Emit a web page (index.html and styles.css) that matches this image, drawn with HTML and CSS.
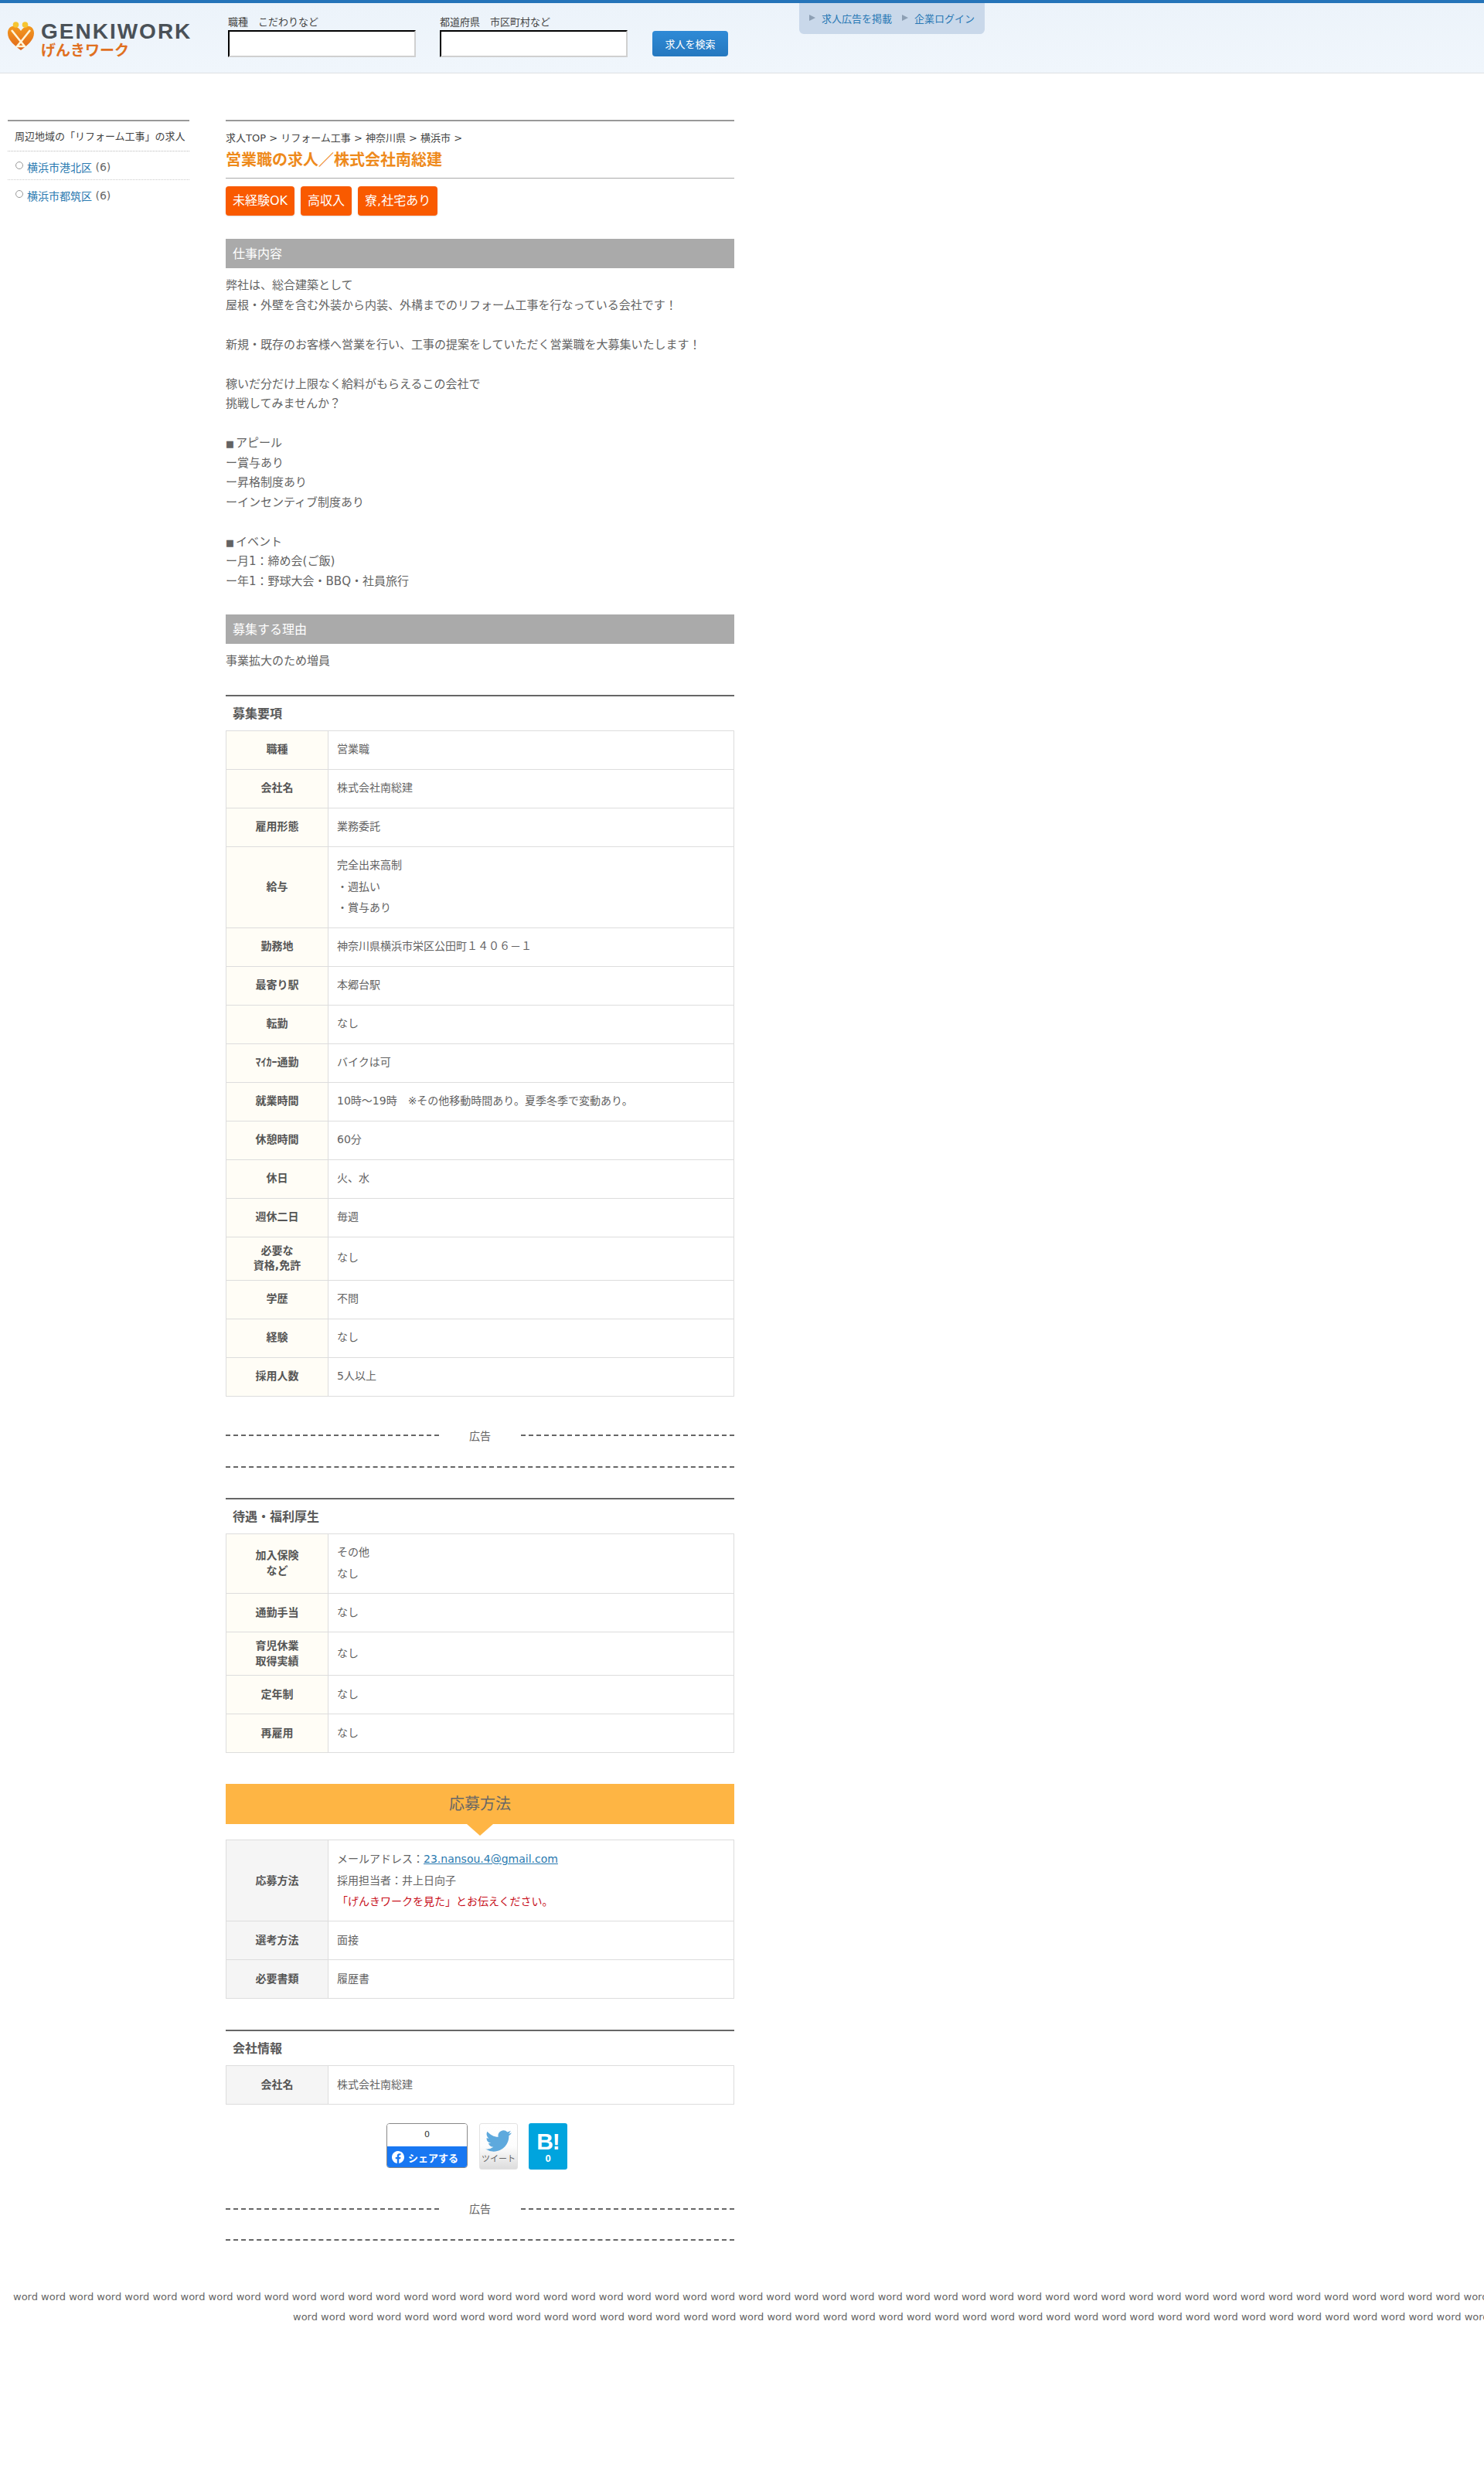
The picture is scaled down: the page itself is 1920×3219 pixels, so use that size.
FILE: index.html
```html
<!DOCTYPE html>
<html lang="ja">
<head>
<meta charset="utf-8">
<title>営業職の求人／株式会社南総建</title>
<link rel="stylesheet" href="styles.css">
</head>
<body>
<header class="site-header">
  <a class="logo">
    <svg class="logo-mark" viewBox="0 0 34 38" width="34" height="38">
      <defs><linearGradient id="hg" x1="0" y1="0" x2="0" y2="1"><stop offset="0" stop-color="#f39a1f"/><stop offset="1" stop-color="#e0651a"/></linearGradient></defs>
      <path d="M17 37C9 31 0 24 0 15 0 9 4 5 9 6c4 1 6 3 8 6 2-3 4-5 8-6 5-1 9 3 9 9 0 9-9 16-17 22z" fill="url(#hg)"/>
      <path d="M5 11l12 15L29 11M17 26l-5 6h10z" fill="none" stroke="#fff5d8" stroke-width="2.6"/>
      <circle cx="10.500" cy="4" r="3.800" fill="#f6c531"/><circle cx="22.500" cy="4" r="3.800" fill="#f6c531"/>
    </svg>
    <span class="logo-text"><span class="logo-en">GENKIWORK</span><span class="logo-ja">げんきワーク</span></span>
  </a>
  <form class="search">
    <label class="field"><span>職種　こだわりなど</span><input type="text"></label>
    <label class="field"><span>都道府県　市区町村など</span><input type="text"></label>
    <button type="button" class="search-btn">求人を検索</button>
  </form>
  <nav class="top-nav">
    <a><i class="arrow"></i>求人広告を掲載</a>
    <a><i class="arrow"></i>企業ログイン</a>
  </nav>
</header>

<div class="wrap">
  <aside class="side">
    <h3 class="side-title">周辺地域の「リフォーム工事」の求人</h3>
    <ul class="side-list">
      <li><a>横浜市港北区</a> (6)</li>
      <li><a>横浜市都筑区</a> (6)</li>
    </ul>
  </aside>

  <main class="main">
    <p class="crumbs">求人TOP &gt; リフォーム工事 &gt; 神奈川県 &gt; 横浜市 &gt;</p>
    <h1 class="title">営業職の求人／株式会社南総建</h1>
    <div class="tags"><span class="tag">未経験OK</span><span class="tag">高収入</span><span class="tag">寮,社宅あり</span></div>

    <h2 class="bar first">仕事内容</h2>
    <p class="body-text">弊社は、総合建築として<br>屋根・外壁を含む外装から内装、外構までのリフォーム工事を行なっている会社です！<br><br>新規・既存のお客様へ営業を行い、工事の提案をしていただく営業職を大募集いたします！<br><br>稼いだ分だけ上限なく給料がもらえるこの会社で<br>挑戦してみませんか？<br><br><span class="sq">■</span>アピール<br>ー賞与あり<br>ー昇格制度あり<br>ーインセンティブ制度あり<br><br><span class="sq">■</span>イベント<br>ー月1：締め会(ご飯)<br>ー年1：野球大会・BBQ・社員旅行</p>

    <h2 class="bar">募集する理由</h2>
    <p class="body-text">事業拡大のため増員</p>

    <h2 class="sub">募集要項</h2>
    <table class="info">
      <tr><th>職種</th><td>営業職</td></tr>
      <tr><th>会社名</th><td>株式会社南総建</td></tr>
      <tr><th>雇用形態</th><td>業務委託</td></tr>
      <tr><th>給与</th><td>完全出来高制<br>・週払い<br>・賞与あり</td></tr>
      <tr><th>勤務地</th><td>神奈川県横浜市栄区公田町１４０６－１</td></tr>
      <tr><th>最寄り駅</th><td>本郷台駅</td></tr>
      <tr><th>転勤</th><td>なし</td></tr>
      <tr><th>ﾏｲｶｰ通勤</th><td>バイクは可</td></tr>
      <tr><th>就業時間</th><td>10時～19時　※その他移動時間あり。夏季冬季で変動あり。</td></tr>
      <tr><th>休憩時間</th><td>60分</td></tr>
      <tr><th>休日</th><td>火、水</td></tr>
      <tr><th>週休二日</th><td>毎週</td></tr>
      <tr><th>必要な<br>資格,免許</th><td>なし</td></tr>
      <tr><th>学歴</th><td>不問</td></tr>
      <tr><th>経験</th><td>なし</td></tr>
      <tr><th>採用人数</th><td>5人以上</td></tr>
    </table>

    <div class="ad"><div class="ad-head"><span>広告</span></div><div class="ad-foot"></div></div>

    <h2 class="sub after-ad">待遇・福利厚生</h2>
    <table class="info">
      <tr><th>加入保険<br>など</th><td>その他<br>なし</td></tr>
      <tr><th>通勤手当</th><td>なし</td></tr>
      <tr><th>育児休業<br>取得実績</th><td>なし</td></tr>
      <tr><th>定年制</th><td>なし</td></tr>
      <tr><th>再雇用</th><td>なし</td></tr>
    </table>

    <h2 class="banner">応募方法</h2>
    <table class="info gray">
      <tr><th>応募方法</th><td>メールアドレス：<a class="mail">23.nansou.4@gmail.com</a><br>採用担当者：井上日向子<br><span class="red">「げんきワークを見た」とお伝えください。</span></td></tr>
      <tr><th>選考方法</th><td>面接</td></tr>
      <tr><th>必要書類</th><td>履歴書</td></tr>
    </table>

    <h2 class="sub after-table">会社情報</h2>
    <table class="info gray">
      <tr><th>会社名</th><td>株式会社南総建</td></tr>
    </table>

    <div class="social">
      <a class="fb">
        <span class="fb-count">0</span>
        <span class="fb-btn">
          <svg viewBox="0 0 24 24" width="16" height="16"><path fill="#fff" d="M24 12.073c0-6.627-5.373-12-12-12s-12 5.373-12 12c0 5.990 4.388 10.954 10.125 11.854v-8.385H7.078v-3.470h3.047V9.430c0-3.007 1.792-4.669 4.533-4.669 1.312 0 2.686.235 2.686.235v2.953H15.830c-1.491 0-1.956.925-1.956 1.874v2.250h3.328l-.532 3.470h-2.796v8.385C19.612 23.027 24 18.062 24 12.073z"/></svg>
          シェアする
        </span>
      </a>
      <a class="tw">
        <svg viewBox="0 2 24 20" width="34" height="28"><path fill="#5ea9dd" d="M23.953 4.570a10 10 0 01-2.825.775 4.958 4.958 0 002.163-2.723c-.951.555-2.005.959-3.127 1.184a4.920 4.920 0 00-8.384 4.482C7.690 8.095 4.067 6.130 1.640 3.162a4.822 4.822 0 00-.666 2.475c0 1.710.870 3.213 2.188 4.096a4.904 4.904 0 01-2.228-.616v.060a4.923 4.923 0 003.946 4.827 4.996 4.996 0 01-2.212.085 4.936 4.936 0 004.604 3.417 9.867 9.867 0 01-6.102 2.105c-.390 0-.779-.023-1.170-.067a13.995 13.995 0 007.557 2.209c9.053 0 13.998-7.496 13.998-13.985 0-.210 0-.420-.015-.630A9.935 9.935 0 0024 4.590z"/></svg>
        <span>ツイート</span>
      </a>
      <a class="hb"><span class="hb-mark">B!</span><span class="hb-count">0</span></a>
    </div>

    <div class="ad"><div class="ad-head"><span>広告</span></div><div class="ad-foot"></div></div>
  </main>
</div>

<footer class="words">
  <div class="words-a">word word word word word word word word word word word word word word word word word word word word word word word word word word word word word word word word word word word word word word word word word word word word word word word word word word word word word word word word word</div>
  <div class="words-b">word word word word word word word word word word word word word word word word word word word word word word word word word word word word word word word word word word word word word word word word word word word word word word word</div>
</footer>
</body>
</html>
```
FILE: styles.css
```css
* { box-sizing: border-box; }
html, body { margin: 0; padding: 0; }
body {
  font-family: "DejaVu Sans", "Noto Sans CJK JP", sans-serif;
  font-size: 14px;
  color: #636363;
  background: #fff;
  overflow-x: hidden;
  min-height: 3219px;
}
a { color: inherit; text-decoration: none; }
h1, h2, h3, p, ul { margin: 0; padding: 0; }

.site-header {
  position: relative;
  display: flex;
  height: 95px;
  border-top: 4px solid #2574b9;
  border-bottom: 1px solid #dde1e3;
  background: linear-gradient(#ecf3fa, #f0f6fc);
}
.logo { display: flex; margin: 24px 0 0 10px; width: 285px; }
.logo-mark { flex: none; }
.logo-text { display: flex; flex-direction: column; margin: 0 0 0 9px; }
.logo-en {
  font: bold 28px/24px "Liberation Sans", sans-serif;
  letter-spacing: 2px;
  color: #4a5157;
  margin-top: 1px;
}
.logo-ja {
  font: bold 19px/22px "Noto Sans CJK JP", sans-serif;
  color: #e0701f;
}
.search { display: flex; align-items: flex-start; }
.field { display: flex; flex-direction: column; width: 243px; margin-right: 31px; font-size: 13px; color: #444; }
.field span { line-height: 20px; height: 20px; margin-top: 15px; }
.field input {
  width: 243px;
  height: 35px;
  padding: 0;
  background: #fff;
  border: 2px inset #d0d0d0;
  border-top-color: #222;
  border-left-color: #222;
  border-radius: 0;
}
.search-btn {
  width: 98px;
  height: 33px;
  margin: 36px 0 0 1px;
  border: 0;
  border-radius: 4px;
  background: linear-gradient(#2f8ad6, #2578bf);
  color: #fff;
  font: 13px/33px "DejaVu Sans", "Noto Sans CJK JP", sans-serif;
  padding: 1px 0 0;
}
.top-nav {
  position: absolute;
  left: 1034px;
  top: 0;
  width: 240px;
  height: 40px;
  display: flex;
  align-items: center;
  padding: 0 0 2px 13px;
  gap: 13px;
  border-radius: 0 0 6px 6px;
  background: #c9d8ea;
  color: #2a79b5;
  font-size: 13px;
}
.top-nav a { display: flex; align-items: center; white-space: nowrap; }
.arrow {
  display: block;
  width: 0;
  height: 0;
  margin-right: 8px;
  border-left: 8px solid #8d9fb4;
  border-top: 4px solid transparent;
  border-bottom: 4px solid transparent;
}

.wrap { display: flex; align-items: flex-start; margin-top: 60px; }
.side { width: 235px; margin-left: 10px; border-top: 2px solid #999; flex: none; }
.side-title {
  font-size: 13px;
  font-weight: normal;
  line-height: 20px;
  color: #444;
  padding: 10px 0 8px 9px;
  white-space: nowrap;
  border-bottom: 1px dotted #bbb;
}
.side-list { list-style: none; }
.side-list li {
  display: flex;
  align-items: center;
  position: relative;
  height: 37px;
  padding: 4px 0 0 25px;
  border-bottom: 1px dotted #ccc;
  white-space: pre;
  font-size: 14px;
  color: #666;
}
.side-list li:last-child { border-bottom: 0; padding-top: 3px; }
.side-list li::before {
  content: "";
  position: absolute;
  left: 10px;
  top: 13px;
  width: 8px;
  height: 8px;
  border: 1px solid #999;
  border-radius: 50%;
}
.side-list a { color: #2a7ab0; }

.main { width: 658px; margin-left: 47px; flex: none; border-top: 2px solid #999; }
.crumbs { font-size: 13px; line-height: 20px; color: #444; margin-top: 12px; }
.title {
  font-size: 20px;
  line-height: 28px;
  font-weight: bold;
  color: #ee8a1b;
  margin-top: 4px;
  padding-bottom: 9px;
  border-bottom: 1px solid #aaa;
}
.tags { display: flex; gap: 8px; margin-top: 10px; }
.tag {
  height: 38px;
  line-height: 38px;
  padding: 0 9px;
  border-radius: 4px;
  background: #f95a00;
  color: #fff;
  font-size: 16px;
  box-shadow: 0 1px 2px rgba(0,0,0,.12);
}
.bar {
  height: 38px;
  line-height: 39px;
  margin-top: 30px;
  padding-left: 9px;
  background: #aaa;
  color: #fff;
  font-size: 16px;
  font-weight: normal;
}
.body-text { font-size: 15px; line-height: 25.5px; margin-top: 10px; }
.sq { font-size: 11.5px; line-height: 0; letter-spacing: 2px; }
.sub {
  margin-top: 30px;
  height: 46px;
  line-height: 45px;
  padding-left: 9px;
  border-top: 2px solid #666;
  font-size: 16px;
  font-weight: bold;
  color: #585858;
}
.sub.after-ad { margin-top: 39px; }
.sub.after-table { margin-top: 40px; }

.info { width: 658px; border-collapse: collapse; table-layout: fixed; }
.info th, .info td { border: 1px solid #ddd; font-size: 14px; }
.info th {
  width: 132px;
  padding: 8px 4px;
  background: #fffdf6;
  line-height: 19.6px;
  font-weight: bold;
  text-align: center;
  color: #555;
}
.info td { padding: 10.75px 11px; line-height: 27.5px; text-align: left; }
.info.gray th { background: #f5f5f5; }
.mail { color: #2a7ab0; text-decoration: underline; }
.red { color: #c8101c; }

.ad { margin-top: 41px; }
.ad-head {
  display: flex;
  align-items: center;
  height: 20px;
}
.ad-head span { width: 106px; text-align: center; line-height: 20px; }
.ad-head::before, .ad-head::after {
  content: "";
  flex: 1;
  border-top: 2px dashed #666;
  margin-top: -1px;
}
.ad-foot { margin-top: 29px; border-top: 2px dashed #666; }

.banner {
  position: relative;
  height: 52px;
  line-height: 52px;
  margin: 40px 0 20px;
  text-align: center;
  background: #feb544;
  color: #666;
  font-size: 20px;
  font-weight: normal;
}
.banner::after {
  content: "";
  position: absolute;
  left: 50%;
  top: 52px;
  margin-left: -17px;
  border-top: 15px solid #feb544;
  border-left: 17px solid transparent;
  border-right: 17px solid transparent;
}

.social { display: flex; align-items: flex-start; justify-content: center; margin-top: 24px; height: 60px; padding-right: 8px; }
.fb {
  display: flex;
  flex-direction: column;
  width: 105px;
  height: 58px;
  border: 1px solid #888;
  border-radius: 4px;
  overflow: hidden;
}
.fb-count { height: 29px; line-height: 28px; text-align: center; font-size: 11px; color: #333; background: #fff; }
.fb-btn {
  display: flex;
  align-items: center;
  gap: 5px;
  height: 28px;
  margin: 0 -1px -1px;
  padding-left: 7px;
  background: #1877f2;
  color: #fff;
  font-size: 13px;
  font-weight: bold;
  white-space: nowrap;
}
.tw {
  display: flex;
  flex-direction: column;
  align-items: center;
  width: 50px;
  height: 60px;
  margin-left: 15px;
  padding-top: 8px;
  border: 1px solid #e2e2e2;
  border-radius: 3px;
  background: linear-gradient(#fff 0, #fdfdfd 50%, #ddd 100%);
  color: #666;
  font-size: 11px;
}
.tw span { line-height: 14px; margin-top: 3px; white-space: nowrap; }
.hb {
  display: flex;
  flex-direction: column;
  align-items: center;
  width: 50px;
  height: 60px;
  margin-left: 14px;
  border-radius: 3px;
  background: #00a4de;
  color: #fff;
  font-family: "Liberation Sans", sans-serif;
  font-weight: bold;
}
.hb-mark { font-size: 30px; line-height: 30px; margin-top: 9px; letter-spacing: -1px; }
.hb-count { font-size: 13px; line-height: 14px; }

.words {
  margin-top: 60px;
  overflow: hidden;
  width: 1920px;
  font-size: 13px;
  line-height: 26px;
  color: #666;
  white-space: nowrap;
}
.words-a { padding-left: 17px; }
.words-b { padding-left: 379px; }
```
